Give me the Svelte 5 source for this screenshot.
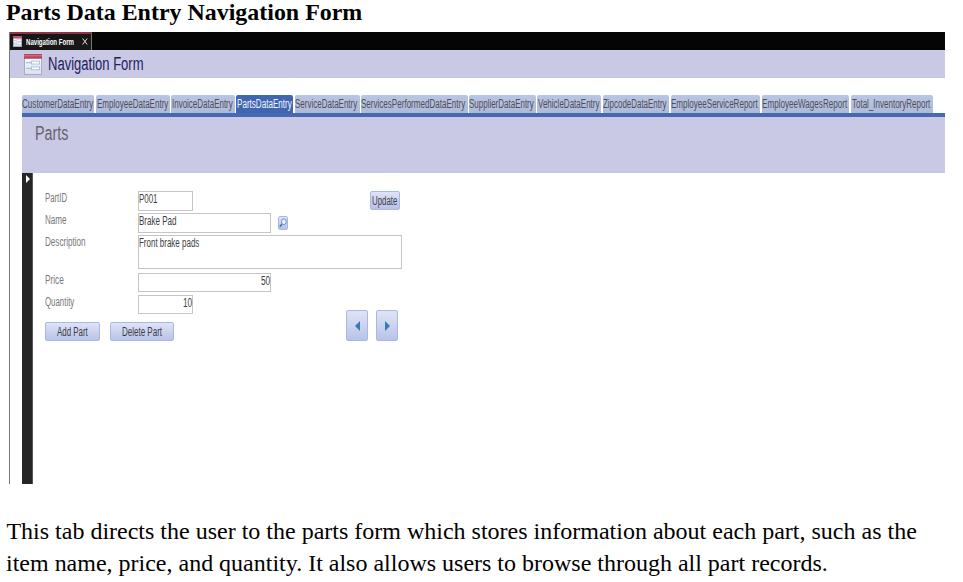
<script>
  const tabs = [
    { label: 'CustomerDataEntry', width: 72, gap: 2, pad: 0, text: 71 },
    { label: 'EmployeeDataEntry', width: 74, gap: 1, pad: 0.5, text: 71.5 },
    { label: 'InvoiceDataEntry', width: 64, gap: 1, pad: 0.5, text: 60.5 },
    { label: 'PartsDataEntry', width: 57, gap: 2, pad: 1, text: 54.5, active: true },
    { label: 'ServiceDataEntry', width: 65, gap: 1, pad: 0, text: 62 },
    { label: 'ServicesPerformedDataEntry', width: 107, gap: 1, pad: 0, text: 104 },
    { label: 'SupplierDataEntry', width: 67, gap: 1, pad: 0, text: 64.5 },
    { label: 'VehicleDataEntry', width: 64, gap: 2, pad: 0.5, text: 61.5 },
    { label: 'ZipcodeDataEntry', width: 66, gap: 2, pad: 0, text: 63.5 },
    { label: 'EmployeeServiceReport', width: 89, gap: 2, pad: 0, text: 86.5 },
    { label: 'EmployeeWagesReport', width: 87, gap: 2, pad: 0, text: 85 },
    { label: 'Total_InventoryReport', width: 82, gap: 0, pad: 1, text: 78 }
  ];

  // Condenses a run of text horizontally to the given width.
  function fit(node, width) {
    node.style.transform = `scaleX(${width / node.offsetWidth})`;
  }
</script>

{#snippet condensed(text, width)}
  <span class="slot" style:width="{width}px"><span class="run" use:fit={width}>{text}</span></span>
{/snippet}

{#snippet formIcon(w, h)}
  <svg width={w} height={h} viewBox="0 0 18 22" preserveAspectRatio="none">
    <defs>
      <linearGradient id="sheet" x2="0" y2="1"><stop stop-color="#fff" /><stop offset="1" stop-color="#d9e0ee" /></linearGradient>
    </defs>
    <rect x="0.5" y="0.5" width="17" height="21" fill="url(#sheet)" stroke="#a9acbc" />
    <rect width="18" height="5" fill="#b9445e" />
    <rect y="1" width="18" height="1.5" fill="#cc6b80" />
    <path d="M2 9h5M2 15h5" stroke="#a9bfdf" stroke-width="1.3" />
    <rect x="7.5" y="7.5" width="8" height="3" fill="#fff" stroke="#a9bfdf" />
    <rect x="7.5" y="13.5" width="8" height="3" fill="#fff" stroke="#a9bfdf" />
  </svg>
{/snippet}

<main>
  <h1>{@render condensed('Parts Data Entry Navigation Form', 356)}</h1>

  <section class="window">
    <div class="titlebar">
      <div class="doc">
        {@render formIcon(9, 11)}
        <b>{@render condensed('Navigation Form', 48)}</b>
        <svg class="close" width="6" height="7" viewBox="0 0 6 7"><path d="M.6.5 5.2 6.5M5.2.5.6 6.5" stroke="#ddd" fill="none" /></svg>
      </div>
    </div>

    <header class="banner">
      {@render formIcon(18, 21)}
      <h2>{@render condensed('Navigation Form', 95.5)}</h2>
    </header>

    <div class="content">
      <nav>
        {#each tabs as t}
          <div
            class="tab"
            class:active={t.active}
            style:width="{t.width}px"
            style:margin-right="{t.gap}px"
            style:padding-left="{t.pad}px"
          >
            {@render condensed(t.label, t.text)}
          </div>
        {/each}
      </nav>
      <div class="part-header"><h3>{@render condensed('Parts', 33.5)}</h3></div>

      <div class="body">
        <div class="selector">
          <svg width="4" height="8" viewBox="0 0 4 8"><path d="M0 0 4 4 0 8Z" fill="#fff" /></svg>
        </div>
        <div class="form">
          <div class="row">
            <label for="id">{@render condensed('PartID', 22)}</label>
            <div id="id" class="field short">{@render condensed('P001', 18.5)}</div>
            <div class="btn update">{@render condensed('Update', 25.5)}</div>
          </div>
          <div class="row">
            <label for="name">{@render condensed('Name', 21.5)}</label>
            <div id="name" class="field">{@render condensed('Brake Pad', 37.5)}</div>
            <div class="btn search">
              <svg width="8" height="12" viewBox="0 0 8 12">
                <path d="M3.2 6.9 0.8 9.8" stroke="#3e70ad" stroke-width="1.6" />
                <ellipse cx="4.9" cy="4.7" rx="2.4" ry="2.9" fill="#edf5ff" stroke="#5d8dc6" />
              </svg>
            </div>
          </div>
          <div class="row tall">
            <label for="desc">{@render condensed('Description', 40.5)}</label>
            <div id="desc" class="field wide">{@render condensed('Front brake pads', 60.5)}</div>
          </div>
          <div class="row">
            <label for="price">{@render condensed('Price', 18.5)}</label>
            <div id="price" class="field num">{@render condensed('50', 9)}</div>
          </div>
          <div class="row">
            <label for="qty">{@render condensed('Quantity', 29.5)}</label>
            <div id="qty" class="field short num">{@render condensed('10', 9)}</div>
          </div>
          <div class="actions">
            <div class="btn add">{@render condensed('Add Part', 31)}</div>
            <div class="btn delete">{@render condensed('Delete Part', 40)}</div>
            <div class="btn step prev"><svg width="5" height="10" viewBox="0 0 5 10"><path d="M5 0v10L0 5Z" fill="#3c78b4" /></svg></div>
            <div class="btn step"><svg width="5" height="10" viewBox="0 0 5 10"><path d="M0 0v10L5 5Z" fill="#3c78b4" /></svg></div>
          </div>
        </div>
      </div>
    </div>
  </section>

  <p>
    {@render condensed('This tab directs the user to the parts form which stores information about each part, such as the', 910)}
    {@render condensed('item name, price, and quantity. It also allows users to browse through all part records.', 821.5)}
  </p>
</main>

<style>
  :global(body) { background: #fff; }
  * { box-sizing: border-box; }
  svg { display: block; flex: none; }
  main {
    width: 963px;
    height: 582px;
    overflow: hidden;
    font-family: 'Liberation Serif', serif;
    color: #000;
  }
  h1, h2, h3, p { margin: 0; font-weight: normal; }
  .slot { display: block; flex: none; white-space: nowrap; }
  .run { display: inline-block; transform-origin: 0 50%; }
  h1 { height: 32px; padding-left: 6.4px; font-size: 24px; line-height: 25px; font-weight: bold; }
  .window {
    width: 936px;
    height: 452px;
    margin-left: 9px;
    border-left: 1px solid #777;
    font-family: 'Liberation Sans', Arial, sans-serif;
    font-size: 12px;
  }
  .titlebar { height: 18px; background: #050505; }
  .doc {
    display: flex;
    align-items: center;
    width: 82px;
    height: 18px;
    padding: 0 0 1px 3px;
    background: #171717;
    border-top: 2px solid #8c3547;
    border-right: 1px solid #777;
  }
  .doc b { margin-left: 4px; font-size: 9.5px; line-height: 14px; color: #fff; }
  .close { margin-left: 8px; }
  .banner {
    display: flex;
    height: 28px;
    padding: 4px 0 0 14px;
    background: #c9c9e6;
  }
  h2 { margin-left: 6px; font-size: 18px; line-height: 21px; color: #23215c; }
  .content { padding: 17px 0 0 12px; }
  nav { display: flex; height: 18px; }
  .tab {
    flex: none;
    height: 18px;
    background: linear-gradient(#b9c5e1, #adbadb);
    border-radius: 2px 2px 0 0;
    line-height: 19px;
    color: #4e4e58;
  }
  .tab.active { background: #4166b1; color: #f2f5ff; }
  .part-header {
    height: 60px;
    padding: 5px 0 0 13px;
    background: #c9c9e6;
    border-top: 4px solid #4669b1;
  }
  h3 { font-size: 20px; line-height: 23px; color: #646469; }
  .body { display: flex; height: 311px; }
  .selector {
    width: 11px;
    padding: 2px 0 0 4px;
    background: #252525;
    border-right: 1px solid #555;
  }
  .form { padding: 18px 0 0 12px; }
  .row { display: flex; height: 22px; }
  .tall { height: 37.5px; }
  label { width: 92.5px; line-height: 15px; color: #77777b; }
  .field {
    width: 133.9px;
    height: 19.5px;
    padding-left: 0.5px;
    background: #fff;
    border: 1px solid #c5c5c7;
    line-height: 15px;
    color: #404044;
  }
  .short { width: 55.9px; }
  .wide { width: 264.9px; height: 34px; }
  .num { display: flex; justify-content: flex-end; line-height: 14px; }
  .btn {
    display: flex;
    flex: none;
    justify-content: center;
    height: 19px;
    background: linear-gradient(#dfe4f5, #b7c3e8);
    border: 1px solid #a9b7e2;
    border-radius: 2px;
    line-height: 17px;
    color: #3c3c48;
  }
  .update { width: 30px; margin-left: 176.6px; line-height: 18px; }
  .search { width: 10px; height: 14px; margin: 3px 0 0 6.6px; }
  .actions { display: flex; align-items: flex-end; height: 24.5px; }
  .add { width: 55px; }
  .delete { width: 64px; margin-left: 10px; }
  .step { align-items: center; width: 22px; height: 31px; margin-left: 8px; }
  .prev { margin-left: 172px; }
  .add, .delete { line-height: 18px; }
  p { padding: 31px 0 0 6.4px; font-size: 24px; line-height: 32px; }
</style>
